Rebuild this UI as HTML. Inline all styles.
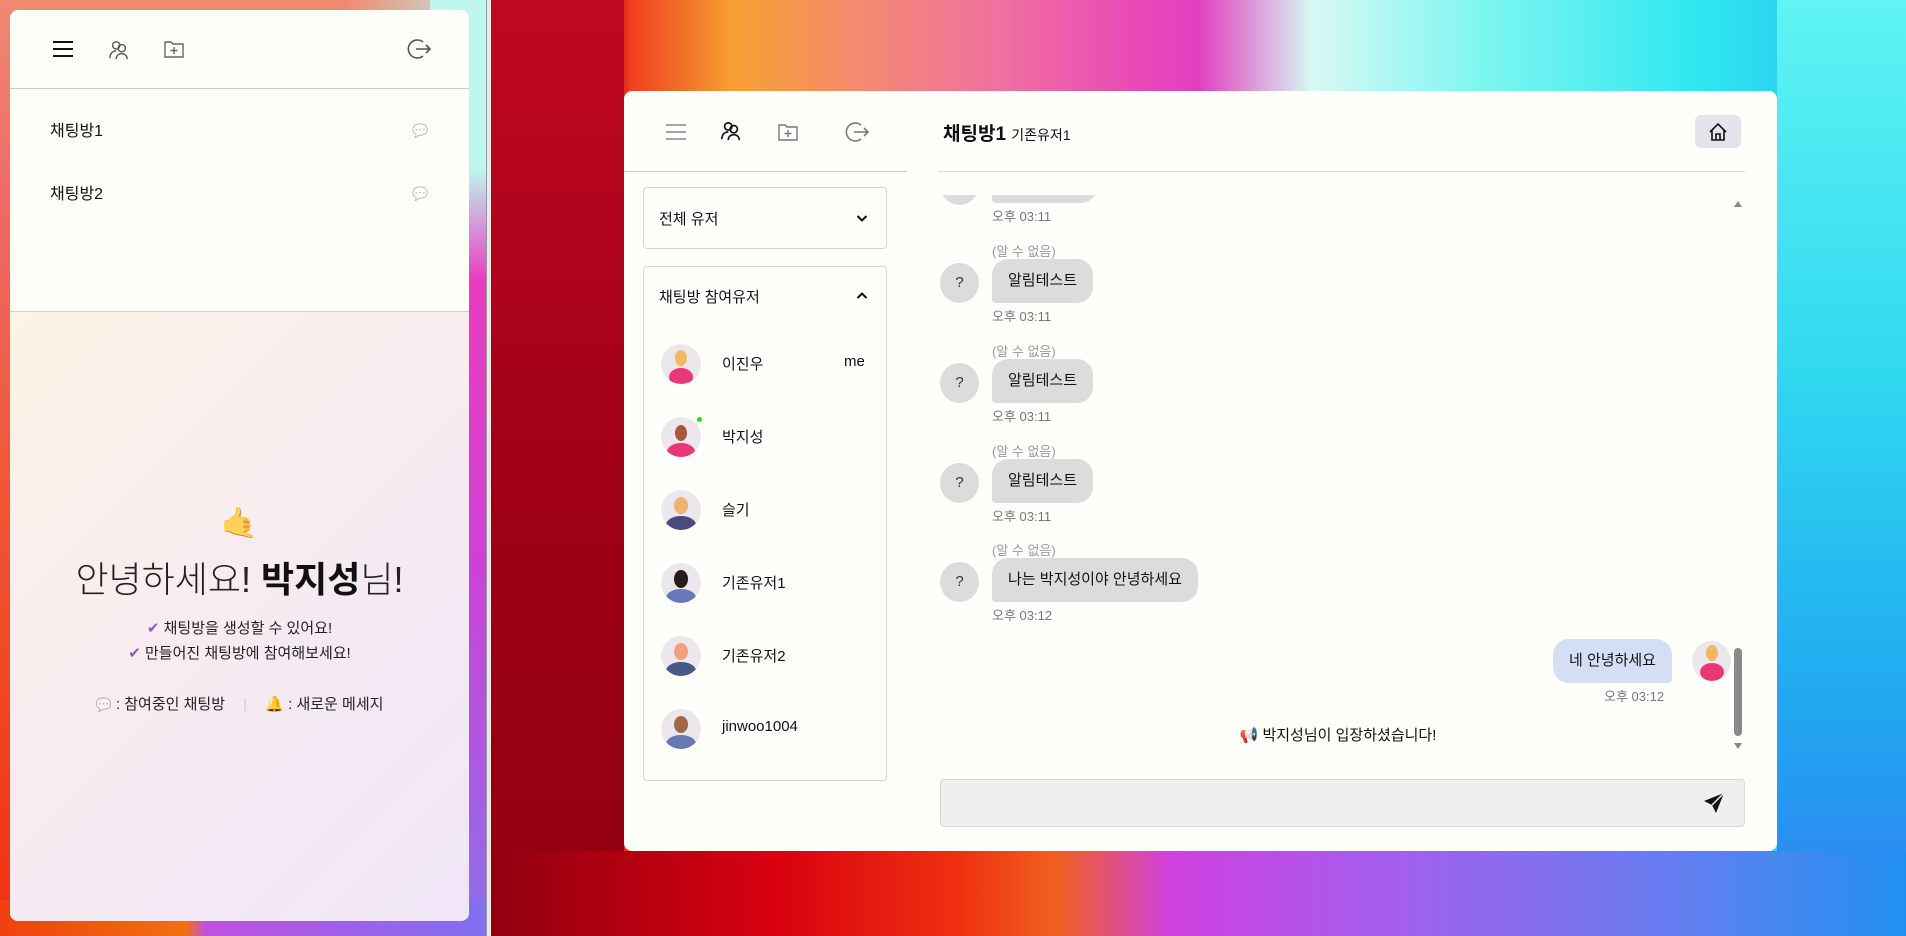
<!DOCTYPE html>
<html><head><meta charset="utf-8">
<style>
*{box-sizing:border-box;margin:0;padding:0}
body{width:1906px;height:936px;overflow:hidden;position:relative;font-family:"Liberation Sans","Noto Sans CJK KR",sans-serif;color:#111;background:#c00018}
.abs{position:absolute}
.bgL{left:0;top:0;width:490px;height:936px;background:
 radial-gradient(ellipse 200px 300px at 480px 60px,#b8f4f0 0%,rgba(184,244,240,0) 70%),
 linear-gradient(180deg,#f08a70 0%,#f06a6a 20%,#f05530 55%,#f03010 100%);}
.bgL2{left:430px;top:0;width:60px;height:936px;background:linear-gradient(180deg,#bff6ef 0%,#bff6ef 18%,#e83cc0 30%,#d040d8 60%,#8a70ec 100%)}
.bgLb{left:0;top:900px;width:490px;height:36px;background:linear-gradient(90deg,#f04010 0%,#f07010 38%,#c050e0 42%,#8070f0 100%)}
.sep{left:486px;top:0;width:5px;height:936px;background:#e8e8ee;border-left:1px solid #999}
.bgR{left:491px;top:0;width:1415px;height:936px;background:
 linear-gradient(90deg,#8a0010 0%,#d00018 8%,rgba(208,0,24,0) 10%),
 linear-gradient(90deg,#e81020 0%,#f04020 10%,#f6a030 17%,#f48a70 26%,#f070a0 36%,#e848b8 46%,#e040c0 50%,#d8f8f4 58%,#7ef6f0 70%,#30e8f0 85%,#20b8f0 100%);}
.bgRl{left:491px;top:0;width:133px;height:936px;background:linear-gradient(180deg,#c00820 0%,#a00018 50%,#900010 100%)}
.bgRb{left:491px;top:851px;width:1415px;height:85px;background:linear-gradient(90deg,#900010 0%,#d80010 20%,#f03010 33%,#f06020 40%,#d040e0 48%,#a060f0 65%,#6080f0 85%,#2090f0 100%)}
.bgRr{left:1777px;top:0;width:129px;height:936px;background:linear-gradient(180deg,#60f4f4 0%,#30d8f0 40%,#20a8f0 75%,#3080f0 100%)}
.panel{left:10px;top:10px;width:459px;height:911px;border-radius:8px;overflow:hidden;background:#fffef9}
.pbot{left:0;top:301px;width:459px;height:610px;border-top:1px solid #cfcfd8;background:linear-gradient(135deg,#fdf3e6 0%,#f8ecf0 45%,#efe6f8 100%)}
.win{left:624px;top:91px;width:1153px;height:760px;border-radius:8px;background:#fefefb;overflow:hidden}
.ico{position:absolute}
.room{position:absolute;left:40px;font-size:16px}
.time{position:absolute;font-size:13px;color:#777}
.nm{position:absolute;font-size:13px;color:#999}
.bub{position:absolute;background:#dcdcdc;border-radius:16px 16px 16px 4px;font-size:15px;line-height:44px;padding:0 16px;height:44px}
.qa{position:absolute;width:39px;height:40px;border-radius:50%;background:#dcdcdc;font-size:15px;text-align:center;line-height:40px;color:#333}
.ul{position:absolute;left:17px;width:40px;height:40px;border-radius:50%;background:#ece7ec;overflow:hidden}
.un{position:absolute;left:78px;font-size:15px}
.sp{opacity:.35;font-size:13px}
</style></head><body>
<div class="abs bgL"></div><div class="abs bgL2"></div><div class="abs bgLb"></div>
<div class="abs bgR"></div><div class="abs bgRl"></div><div class="abs bgRr"></div><div class="abs bgRb"></div>
<div class="abs sep"></div>

<div class="abs panel">
 <svg class="ico" style="left:42px;top:30px" width="22" height="18" viewBox="0 0 22 18"><path d="M1 2H21M1 9H21M1 16H21" stroke="#111" stroke-width="2"/></svg>
 <svg class="ico" style="left:98px;top:29px" width="22" height="22" viewBox="0 0 24 24" fill="none" stroke="#555" stroke-width="1.5"><circle cx="9" cy="7" r="4"/><path d="M2 21c0-5 3-8 7-8"/><circle cx="15" cy="10" r="4"/><path d="M9 22c0-4 3-6 6-6s6 2 6 6"/></svg>
 <svg class="ico" style="left:154px;top:30px" width="20" height="18" viewBox="0 0 20 18" fill="none" stroke="#666" stroke-width="1.4"><path d="M1 2h6l2 2h10v13H1z"/><path d="M10 7v7M6.5 10.5h7"/></svg>
 <svg class="ico" style="left:397px;top:28px" width="24" height="22" viewBox="0 0 24 22" fill="none" stroke="#555" stroke-width="1.6"><path d="M16 4A9 9 0 1 0 16 18"/><path d="M9 11h14M19 7l4 4-4 4"/></svg>
 <div class="abs" style="left:0;top:78px;width:459px;height:1px;background:#c8c8d0"></div>
 <div class="room" style="top:107px">채팅방1</div>
 <div class="room" style="top:170px">채팅방2</div>
 <div class="abs sp" style="left:402px;top:113px">💬</div>
 <div class="abs sp" style="left:402px;top:176px">💬</div>
 <div class="abs pbot">
  <div class="abs" style="left:0;width:459px;top:194px;text-align:center;font-size:30px;opacity:.75">🤙</div>
  <div class="abs" style="left:0;width:459px;top:239px;text-align:center;font-size:36px;font-weight:300;color:#222">안녕하세요! <b style="font-weight:700;color:#111">박지성</b>님!</div>
  <div class="abs" style="left:0;width:459px;top:304px;text-align:center;font-size:15px;line-height:25px;color:#222"><span style="color:#8a5ac0">✔</span> 채팅방을 생성할 수 있어요!<br><span style="color:#8a5ac0">✔</span> 만들어진 채팅방에 참여해보세요!</div>
  <div class="abs" style="left:0;width:459px;top:381px;text-align:center;font-size:15px;color:#222"><span class="sp">💬</span> : 참여중인 채팅방 <span style="color:#ccc;margin:0 14px">|</span> <span style="color:#e8b040">🔔</span> : 새로운 메세지</div>
 </div>
</div>

<div class="abs win">
 <svg class="ico" style="left:41px;top:32px" width="22" height="18" viewBox="0 0 22 18"><path d="M1 2H21M1 9H21M1 16H21" stroke="#888" stroke-width="1.6"/></svg>
 <svg class="ico" style="left:96px;top:29px" width="22" height="22" viewBox="0 0 24 24" fill="none" stroke="#111" stroke-width="1.8"><circle cx="9" cy="7" r="4"/><path d="M2 21c0-5 3-8 7-8"/><circle cx="15" cy="10" r="4"/><path d="M9 22c0-4 3-6 6-6s6 2 6 6"/></svg>
 <svg class="ico" style="left:154px;top:32px" width="20" height="18" viewBox="0 0 20 18" fill="none" stroke="#777" stroke-width="1.4"><path d="M1 2h6l2 2h10v13H1z"/><path d="M10 7v7M6.5 10.5h7"/></svg>
 <svg class="ico" style="left:221px;top:30px" width="24" height="22" viewBox="0 0 24 22" fill="none" stroke="#777" stroke-width="1.6"><path d="M16 4A9 9 0 1 0 16 18"/><path d="M9 11h14M19 7l4 4-4 4"/></svg>
 <div class="abs" style="left:0;top:80px;width:283px;height:1px;background:#c8cce0"></div>

 <div class="abs" style="left:19px;top:96px;width:244px;height:62px;border:1px solid #d4d4dc;border-radius:4px">
  <div class="abs" style="left:15px;top:20px;font-size:15px">전체 유저</div>
  <svg class="ico" style="left:212px;top:26px" width="12" height="9" viewBox="0 0 12 9"><path d="M1.5 2l4.5 4.5 4.5-4.5" stroke="#111" stroke-width="2" fill="none"/></svg>
 </div>
 <div class="abs" style="left:19px;top:175px;width:244px;height:515px;border:1px solid #d4d4dc;border-radius:4px">
  <div class="abs" style="left:15px;top:19px;font-size:15px">채팅방 참여유저</div>
  <svg class="ico" style="left:212px;top:24px" width="12" height="9" viewBox="0 0 12 9"><path d="M1.5 7l4.5-4.5 4.5 4.5" stroke="#111" stroke-width="2" fill="none"/></svg>
  <div class="ul" style="top:77px"><div class="abs" style="left:8px;top:24px;width:24px;height:18px;border-radius:50%;background:#e83878"></div><div class="abs" style="left:14px;top:6px;width:12px;height:16px;border-radius:50%;background:#f0b860"></div></div>
  <div class="un" style="top:86px">이진우</div><div class="abs" style="left:200px;top:86px;font-size:15px">me</div>
  <div class="ul" style="top:150px"><div class="abs" style="left:6px;top:26px;width:28px;height:18px;border-radius:50%;background:#e83878"></div><div class="abs" style="left:14px;top:8px;width:12px;height:16px;border-radius:50%;background:#a85838"></div></div>
  <div class="abs" style="left:53px;top:150px;width:5px;height:5px;border-radius:50%;background:#20e020"></div>
  <div class="un" style="top:159px">박지성</div>
  <div class="ul" style="top:223px"><div class="abs" style="left:5px;top:26px;width:30px;height:18px;border-radius:50%;background:#4a4a80"></div><div class="abs" style="left:13px;top:7px;width:14px;height:17px;border-radius:50%;background:#f0b070"></div></div>
  <div class="un" style="top:232px">슬기</div>
  <div class="ul" style="top:296px"><div class="abs" style="left:5px;top:26px;width:30px;height:18px;border-radius:50%;background:#6878b8"></div><div class="abs" style="left:13px;top:7px;width:14px;height:18px;border-radius:50%;background:#2a1a1a"></div></div>
  <div class="un" style="top:305px">기존유저1</div>
  <div class="ul" style="top:369px"><div class="abs" style="left:5px;top:26px;width:30px;height:18px;border-radius:50%;background:#4a5888"></div><div class="abs" style="left:13px;top:7px;width:14px;height:17px;border-radius:50%;background:#f0a080"></div></div>
  <div class="un" style="top:378px">기존유저2</div>
  <div class="ul" style="top:442px"><div class="abs" style="left:5px;top:26px;width:30px;height:18px;border-radius:50%;background:#6878b0"></div><div class="abs" style="left:13px;top:7px;width:14px;height:17px;border-radius:50%;background:#a06848"></div></div>
  <div class="un" style="top:451px">jinwoo1004</div>
 </div>

 <div class="abs" style="left:319px;top:28px;font-size:19px;font-weight:700">채팅방1 <span style="font-size:14px;font-weight:400">기존유저1</span></div>
 <div class="abs" style="left:1071px;top:24px;width:46px;height:33px;border-radius:6px;background:#e4e4ec"></div>
 <svg class="ico" style="left:1084px;top:31px" width="20" height="20" viewBox="0 0 20 20" fill="none" stroke="#111" stroke-width="1.6"><path d="M2 10L10 2l8 8M4 8v10h12V8M8 18v-6h4v6"/></svg>
 <div class="abs" style="left:314px;top:80px;width:807px;height:1px;background:#d8dae8"></div>

 <div class="abs" style="left:314px;top:104px;width:800px;height:560px;overflow:hidden">
  <div class="qa" style="left:2px;top:-30px"></div>
  <div class="bub" style="left:54px;top:-36px;width:105px"></div>
  <div class="time" style="left:54px;top:11px">오후 03:11</div>

  <div class="nm" style="left:54px;top:46px">(알 수 없음)</div><div class="qa" style="left:2px;top:68px">?</div>
  <div class="bub" style="left:54px;top:64px">알림테스트</div><div class="time" style="left:54px;top:111px">오후 03:11</div>

  <div class="nm" style="left:54px;top:146px">(알 수 없음)</div><div class="qa" style="left:2px;top:168px">?</div>
  <div class="bub" style="left:54px;top:164px">알림테스트</div><div class="time" style="left:54px;top:211px">오후 03:11</div>

  <div class="nm" style="left:54px;top:246px">(알 수 없음)</div><div class="qa" style="left:2px;top:268px">?</div>
  <div class="bub" style="left:54px;top:264px">알림테스트</div><div class="time" style="left:54px;top:311px">오후 03:11</div>

  <div class="nm" style="left:54px;top:345px">(알 수 없음)</div><div class="qa" style="left:2px;top:367px">?</div>
  <div class="bub" style="left:54px;top:363px">나는 박지성이야 안녕하세요</div><div class="time" style="left:54px;top:410px">오후 03:12</div>

  <div class="bub" style="left:615px;top:444px;background:#d4dff6;border-radius:16px 16px 4px 16px">네 안녕하세요</div>
  <div class="abs" style="left:754px;top:446px;width:39px;height:40px;border-radius:50%;background:#ece7ec;overflow:hidden"><div class="abs" style="left:8px;top:22px;width:24px;height:18px;border-radius:50%;background:#e83878"></div><div class="abs" style="left:14px;top:4px;width:12px;height:16px;border-radius:50%;background:#f0b860"></div></div>
  <div class="time" style="left:666px;top:491px">오후 03:12</div>

  <div class="abs" style="left:0;width:800px;top:529px;text-align:center;font-size:15px"><span style="color:#e03070">📢</span> 박지성님이 입장하셨습니다!</div>
 </div>
 <div class="abs" style="left:1110px;top:110px;width:0;height:0;border-left:4px solid transparent;border-right:4px solid transparent;border-bottom:6px solid #888"></div>
 <div class="abs" style="left:1110px;top:557px;width:8px;height:88px;border-radius:4px;background:#8a8a8a"></div>
 <div class="abs" style="left:1110px;top:652px;width:0;height:0;border-left:4px solid transparent;border-right:4px solid transparent;border-top:6px solid #888"></div>

 <div class="abs" style="left:316px;top:688px;width:805px;height:48px;border:1px solid #d8d8d8;border-radius:4px;background:#efefef"></div>
 <svg class="ico" style="left:1078px;top:700px" width="24" height="24" viewBox="0 0 24 24"><path d="M22 2L2 10l8 4 4 8z" fill="#111"/><path d="M22 2L10 14" stroke="#efefef" stroke-width="1.5"/></svg>
</div>
</body></html>
